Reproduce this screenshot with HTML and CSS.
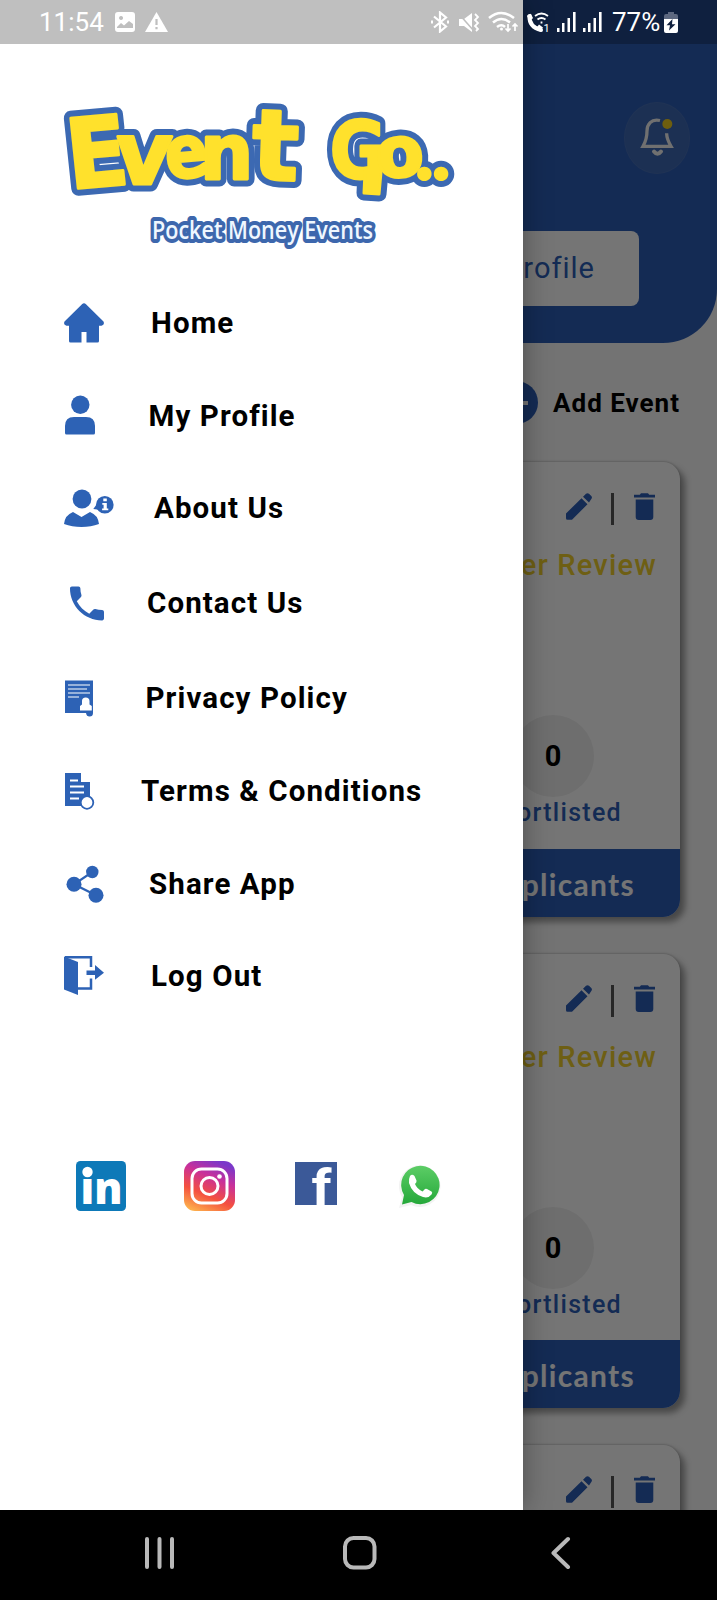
FILE: index.html
```html
<!DOCTYPE html>
<html lang="en">
<head>
<meta charset="utf-8">
<title>Event Go</title>
<link rel="stylesheet" href="styles.css">
</head>
<body>
<svg width="0" height="0" class="defs">
  <defs>
    <symbol id="pencil" viewBox="0 0 26 27"><path d="M0 20.500 15.500 5.200l6 6L6 26.800H1.500Q0 26.800 0 25.300zM17 3.700 20 .8q1.500-1.300 3 0L25.300 3q1.300 1.500 0 3L23 9.500z"/></symbol>
    <symbol id="trash" viewBox="0 0 21 27"><path d="M0 1.700h5.800L7 .2h7l1.200 1.500H21v2.800H0zM1.700 6.500h17.600V24q0 3-3 3H4.700q-3 0-3-3z"/></symbol>
    <symbol id="signal" viewBox="0 0 20 20"><path d="M0 16h2.500v4H0zM5 11h2.500v9H5zM10.500 6H13v14h-2.500zM16 0h2.600v20H16z"/></symbol>
    <linearGradient id="ig" x1="0.2" y1="1" x2="0.65" y2="0"><stop offset="0" stop-color="#fdb04c"/><stop offset=".35" stop-color="#f4503f"/><stop offset=".7" stop-color="#c9309a"/><stop offset="1" stop-color="#7b38c9"/></linearGradient>
    <linearGradient id="wa" x1="0" y1="0" x2="0" y2="1"><stop offset="0" stop-color="#5ccd66"/><stop offset="1" stop-color="#25a83a"/></linearGradient>
  </defs>
</svg>
<div class="phone">
  <div class="stage">
    <main class="page">
      <header class="hero">
        <div class="bell">
          <svg width="66" height="72" viewBox="0 0 66 72" fill="none" stroke="#f3f3f3" stroke-width="3.300"><path d="M36 19.500c-9-2-13 4-13 10.500 0 7-1 10-4 15.300h28c-3-5-4.200-7.300-4.400-13"/><path d="M30 50.500q3.500 4.500 7 0" stroke-width="4" stroke-linecap="round"/><circle cx="43.300" cy="23" r="5" fill="#f0cc20" stroke="none"/></svg>
        </div>
        <div class="profile-btn">My Profile</div>
      </header>
      <div class="add"><span class="plus"></span><span>Add Event</span></div>
      <section class="cards">
        <article class="card">
          <div class="tools"><svg class="pencil"><use href="#pencil"/></svg><i></i><svg class="trash"><use href="#trash"/></svg></div>
          <div class="review">Under Review</div>
          <div class="stat"><b>0</b><span>Shortlisted</span></div>
          <div class="foot">Applicants</div>
        </article>
        <article class="card">
          <div class="tools"><svg class="pencil"><use href="#pencil"/></svg><i></i><svg class="trash"><use href="#trash"/></svg></div>
          <div class="review">Under Review</div>
          <div class="stat"><b>0</b><span>Shortlisted</span></div>
          <div class="foot">Applicants</div>
        </article>
        <article class="card">
          <div class="tools"><svg class="pencil"><use href="#pencil"/></svg><i></i><svg class="trash"><use href="#trash"/></svg></div>
        </article>
      </section>
    </main>
    <div class="scrim"></div>
    <aside class="drawer">
      <svg class="logo" width="420" height="170" viewBox="0 0 420 170">
        <g id="word" class="word">
          <text transform="translate(20 99) skewY(-5) skewX(6) scale(.92 1)" font-size="97">E</text>
          <text transform="translate(64 94) skewX(-3)" font-size="87">v</text>
          <text transform="translate(117 89) rotate(-5) scale(.87 1)" font-size="73">e</text>
          <text transform="translate(150 89) scale(.97 1)" font-size="77">n</text>
          <text transform="translate(201 89) rotate(2) scale(1 1)" font-size="98">t</text>
          <text transform="translate(280 88) scale(.86 1)" font-size="79">G</text>
          <path d="M315 82 331 82 329 104 314 103z"/>
          <text transform="translate(327 88) rotate(-4)" font-size="70">o</text>
          <text class="dots" x="366" y="89" font-size="70">..</text>
        </g>
        <use href="#word" class="face"/>
        <text class="tag" x="102" y="148.500" textLength="221" lengthAdjust="spacingAndGlyphs">Pocket Money Events</text>
      </svg>
      <nav class="menu">
        <a><svg viewBox="0 0 50 50"><path d="M18 6.200q2-2 4 0L39.500 23.500q1.500 3.500-2 4.200H35V43q0 1.500-1.500 1.500H22.500V34h-5v10.500H6.500Q5 44.500 5 43V27.700H2.500Q-1 27 .5 23.500z"/></svg><span>Home</span></a>
        <a><svg viewBox="0 0 50 50"><circle cx="16.300" cy="14.700" r="9.200"/><path d="M1 43V36q0-9 9-9h12q9 0 9 9v7q0 1.500-1.500 1.500h-27Q1 44.500 1 43z"/></svg><span>My Profile</span></a>
        <a><svg viewBox="0 0 50 50"><circle cx="18" cy="16" r="9.400"/><path d="M0 41q1-9 9-12l8.500 5L26 29q8 3 9 12-8 3-17.500 3T0 41z"/><circle cx="40.800" cy="21.800" r="8.800"/><path d="M35 18 29.300 26 37 27z"/><path d="M39.300 15.500h3.500v2.800h-3.500zM38.300 20h4.500v5.500h1.500v1.700h-6.200v-1.700h1.500v-3.800h-1.300z" fill="#fff"/></svg><span>About Us</span></a>
        <a><svg viewBox="0 0 50 50"><path transform="translate(.3 2.800) scale(1.890)" d="M6.620 10.790c1.440 2.830 3.760 5.140 6.590 6.590l2.200-2.200c.27-.27.67-.36 1.020-.24 1.120.37 2.330.57 3.570.57.55 0 1 .45 1 1V20c0 .55-.45 1-1 1-9.390 0-17-7.610-17-17 0-.55.45-1 1-1h3.500c.55 0 1 .45 1 1 0 1.250.2 2.450.57 3.570.11.35.03.74-.25 1.020z"/></svg><span>Contact Us</span></a>
        <a><svg viewBox="0 0 50 50"><path d="M1 7.500h28V40q0 3.500-3.500 3.500-3 0-3.500-3.500H1z"/><path d="M4 12h22M4 16h19M4 20h22M4 24h11" stroke="#fff" stroke-width="1.200"/><path d="M16 37.500V33l2-1.500V28q0-3.500 3.700-3.500T25.500 28v3.500l2.300 1.500v4.500z" fill="#fff"/></svg><span>Privacy Policy</span></a>
        <a><svg viewBox="0 0 50 50"><path d="M1 7h16v9h9v15l-8 9H1z"/><path d="M6 14.500h8M6 20.500h14M6 26.500h14M6 32.500h9" stroke="#fff" stroke-width="1.800"/><circle cx="23" cy="36.500" r="6.300" fill="#fff" stroke="#2d62b5" stroke-width="1.800"/></svg><span>Terms &amp; Conditions</span></a>
        <a><svg viewBox="0 0 50 50"><path d="M28.300 14 10 26.300 32 37.300" fill="none" stroke="#2d62b5" stroke-width="2.200"/><circle cx="28.300" cy="14" r="6.200"/><circle cx="10" cy="26.300" r="7.500"/><circle cx="32" cy="37.300" r="7.500"/></svg><span>Share App</span></a>
        <a><svg viewBox="0 0 50 50"><path d="M0 6.500 14 12v33L0 39.500z"/><path d="M1 7.200h26V17M27 28.500v10H14" fill="none" stroke="#2d62b5" stroke-width="2.500"/><path d="M22.500 20.500H31V15l9 7.800-9 7V25h-8.500z"/></svg><span>Log Out</span></a>
      </nav>
      <div class="social">
        <svg width="50" height="50" viewBox="0 0 50 50"><rect width="50" height="50" rx="4.500" fill="#0d79b8"/><text x="4.500" y="43.300" class="in" textLength="42" lengthAdjust="spacingAndGlyphs">ın</text><circle cx="11.500" cy="11" r="5.200" fill="#fff"/></svg>
        <svg width="51" height="50" viewBox="0 0 51 50"><rect width="51" height="50" rx="11" fill="url(#ig)"/><g fill="none" stroke="#fff" stroke-width="3"><rect x="8" y="8" width="35" height="34" rx="9.500"/><circle cx="25.500" cy="25" r="8.500"/></g><circle cx="35.500" cy="15.500" r="2.300" fill="#fff"/></svg>
        <svg width="42" height="43" viewBox="0 0 42 43"><rect width="42" height="43" fill="#3b5998"/><text x="16.500" y="43" class="fb" textLength="20" lengthAdjust="spacingAndGlyphs">f</text></svg>
        <svg width="46" height="46" viewBox="0 0 46 46"><path d="M2 44 5 33A20.800 20.800 0 1 1 14 41z" fill="#f3f3f3"/><path d="M5 40.500 7 31A19.200 19.200 0 1 1 14.500 38z" fill="url(#wa)"/><path d="M13 12q2-2.500 4.500 0l2 4.500q.5 1.500-1.500 3.500 2 5 7.500 7.500l2.500-2.500q1-.7 2 0l4.500 2.500q1.500 1 0 3-3 4-8.500 2.500-11-3.500-14-14-.5-4 1-7z" fill="#fff"/></svg>
      </div>
    </aside>
    <div class="status">
      <span class="time">11:54</span>
      <svg class="s-img" width="20" height="20" viewBox="0 0 20 20"><path fill="#fff" fill-rule="evenodd" d="M3 0h14q3 0 3 3v14q0 3-3 3H3q-3 0-3-3V3q0-3 3-3zM2 16h16v-4l-4-3-5 4.500L6 11l-4 4zM6 4a2 2 0 1 0 .1 0z"/></svg>
      <svg class="s-warn" width="23" height="20" viewBox="0 0 23 20"><path fill="#fff" d="M11.500 0 23 20H0z"/><path stroke="#bfbfbf" stroke-width="2.200" d="M11.500 7v6M11.500 15v2.200"/></svg>
      <svg class="s-bt" width="20" height="22" viewBox="0 0 20 22" fill="none" stroke="#fff" stroke-width="2.200"><path d="m4 5.500 12 10-6 5V1.500l6 5-12 10"/><path d="M1 11h2M17 11h2" stroke-width="3"/></svg>
      <svg class="s-mute" width="21" height="21" viewBox="0 0 21 21"><path fill="#fff" d="M0 7h5l8-6v19l-8-6H0z"/><path d="m0 2 15 17" stroke="#bfbfbf" stroke-width="1.500"/><path d="m16 2 3 3-3 3 3 3-3 3 3 3-2 2" fill="none" stroke="#fff" stroke-width="1.800"/></svg>
      <svg class="s-wifi" width="31" height="22" viewBox="0 0 31 22" fill="none" stroke="#fff" stroke-width="2.500"><path d="M1 7q12-10 25 0M5 11.500q8.500-7 17 0M9 16q4.500-3.500 8 0"/><path d="M20 13v7m-2.500-2.500L20 20l2.500-2.500M27 20v-7m-2.500 2.500L27 13l2.500 2.500" stroke-width="1.700"/><circle cx="13.500" cy="18" r="1.500" fill="#fff" stroke="none"/></svg>
      <svg class="s-call" width="25" height="21" viewBox="0 0 25 21"><path fill="none" stroke="#fff" stroke-width="4" stroke-linecap="round" d="M3.500 4Q3 15 15 18"/><path stroke="#fff" stroke-width="5" d="m2 6 4-2M12 18l3-4"/><path fill="none" stroke="#fff" stroke-width="1.800" d="M9 4q6.500-5 13 0M11.500 7.500q4-3 8 0M15.500 9.500v2"/><text x="17.500" y="19.500" class="one">1</text></svg>
      <svg class="s-sig" width="20" height="20"><use href="#signal"/></svg>
      <svg class="s-sig" width="20" height="20"><use href="#signal"/></svg>
      <span class="pct">77%</span>
      <svg class="s-bat" width="14" height="21" viewBox="0 0 14 21"><path fill="#5d6880" d="M4 0h6v2h2q2 0 2 2v5H0V4q0-2 2-2h2z"/><path fill="#fff" d="M0 7h14v12q0 2-2 2H2q-2 0-2-2z"/><path fill="#11213f" d="m8.500 7-6 6.300h3.500L5 18.500l6.500-6.300H8z"/></svg>
    </div>
  </div>
  <footer class="navbar">
    <svg class="recents" width="30" height="32" viewBox="0 0 30 32"><path d="M2 2v28M14.500 2v28M27 2v28"/></svg>
    <svg class="homekey" width="34" height="34" viewBox="0 0 34 34"><rect x="2" y="2" width="29.500" height="29.500" rx="8.500"/></svg>
    <svg class="back" width="20" height="34" viewBox="0 0 20 34"><path d="M17 3 2.500 17 17 31"/></svg>
  </footer>
</div>
</body>
</html>
```

FILE: styles.css
```css
* { box-sizing: border-box; }
body { margin: 0; font-family: Roboto, "Liberation Sans", sans-serif; color: #000; }
.defs { position: absolute; }
.phone { width: 717px; height: 1600px; display: flex; flex-direction: column; overflow: hidden; }
.stage { position: relative; height: 1510px; overflow: hidden; background: #fafafa; }
svg { display: block; flex: none; }

/* Screen beneath the drawer */
.page { display: flex; flex-direction: column; align-items: stretch; }
.hero { height: 343px; background: #2d5fb8; border-bottom-right-radius: 54px; display: flex; flex-direction: column; align-items: flex-end; padding-top: 102px; }
.bell { width: 66px; height: 72px; margin-right: 27px; border-radius: 50%; background: #3d69b6; border: 1px solid #476fb7; }
.bell svg { margin: -2px -1px; }
.profile-btn { width: 400px; height: 75px; margin: 57px 78px 0 0; padding-right: 44px; border-radius: 8px; background: #fff; color: #2d5fb8; text-align: right; font-size: 29px; line-height: 75px; letter-spacing: 1px; }
.add { height: 43px; margin: 38px 37px 0 0; display: flex; justify-content: flex-end; align-items: center; gap: 15px; font-size: 26px; font-weight: 700; letter-spacing: 1px; }
.plus { width: 43px; height: 43px; border-radius: 50%; background: linear-gradient(#fff, #fff) center / 23px 4px no-repeat, linear-gradient(#fff, #fff) center / 4px 23px no-repeat, #2d5fb8; }
.cards { margin: 38px 37px 0 37px; display: flex; flex-direction: column; gap: 37px; }
.card { height: 454.500px; flex: none; background: #fff; border-radius: 17px; box-shadow: 5px 5px 6px rgba(0,0,0,.38), 0 -1px 2px rgba(0,0,0,.15); overflow: hidden; display: flex; flex-direction: column; align-items: flex-end; }
.tools { height: 33px; margin: 31px 25px 0 0; display: flex; align-items: flex-start; fill: #2d5fb8; }
.tools i { width: 3px; height: 32px; background: #555; margin: 0 20px 0 20px; }
.tools .pencil { width: 26px; height: 27px; margin-right: -1px; }
.tools .trash { width: 21px; height: 27px; }
.review { height: 40px; line-height: 40px; margin: 19px 23px 0 0; color: #f0cf2d; font-size: 29px; font-weight: 500; letter-spacing: 1.200px; }
.stat { margin: 130px 58px 0 0; display: flex; flex-direction: column; align-items: flex-end; }
.stat b { width: 82px; height: 82px; margin-right: 28px; border-radius: 50%; background: #f0f0f0; font-size: 29px; line-height: 82px; text-align: center; }
.stat span { height: 30px; line-height: 32px; font-size: 25px; font-weight: 500; letter-spacing: 1.300px; color: #2d5fb8; }
.foot { align-self: stretch; height: 68px; margin-top: auto; padding-right: 45px; text-align: right; font: 700 30px/70px Lato, sans-serif; letter-spacing: 1.300px; color: #fff; background: #2d5fb8; }
.scrim { position: absolute; inset: 0; background: rgba(0,0,0,.54); }

/* Navigation drawer */
.drawer { position: absolute; top: 0; left: 0; width: 523px; height: 1510px; background: #fff; box-shadow: 0 0 26px rgba(0,0,0,.35); padding-top: 90px; }
.logo { margin-left: 50px; fill: #3c69b2; stroke: #3c69b2; stroke-width: 15px; }
.word { font-family: "DejaVu Sans", sans-serif; font-weight: 700; stroke-linejoin: round; }
.word .dots { font-family: Lato, sans-serif; font-weight: 900; }
.face { fill: #ffe12c; stroke: #ffe12c; stroke-width: 3px; }
.tag { font: 600 25px "Open Sans", sans-serif; fill: #eff7ff; stroke: #3d67ad; stroke-width: 8px; stroke-linejoin: round; paint-order: stroke; }
.menu { margin: 32.500px 0 0 64px; display: flex; flex-direction: column; }
.menu a { height: 60px; display: flex; align-items: center; font-size: 29.500px; font-weight: 700; letter-spacing: 1.100px; white-space: nowrap; }
.menu a > svg { width: 50px; height: 50px; fill: #2d62b5; }
.menu a + a { margin-top: 32.500px; }
.menu a:nth-child(4), .menu a:nth-child(5) { margin-top: 35px; }
.menu a:nth-child(6) { margin-top: 33px; }
.menu a:nth-child(8) { margin-top: 32px; }
.menu span { margin-left: 37px; }
.menu a:nth-child(2) span { margin-left: 34.500px; }
.menu a:nth-child(3) span { margin-left: 40px; }
.menu a:nth-child(4) span { margin-left: 33px; }
.menu a:nth-child(5) span { margin-left: 31.500px; }
.menu a:nth-child(6) span { margin-left: 27px; }
.menu a:nth-child(7) span { margin-left: 35px; }
.menu a:nth-child(2) span, .menu a:nth-child(7) span, .menu a:nth-child(8) span { padding-top: 2px; }
.social { display: flex; align-items: flex-start; margin: 156px 0 0 76px; }
.social svg:nth-child(2) { margin-left: 58px; }
.social svg:nth-child(3) { margin: 1px 0 0 60px; }
.social svg:nth-child(4) { margin: 3px 0 0 60px; }
.in { font: 800 45px "Open Sans", sans-serif; fill: #fff; stroke: none; }
.fb { font: 700 50px Roboto, sans-serif; fill: #fff; }

/* System bars */
.status { position: absolute; top: 0; left: 0; width: 717px; height: 44px; background: rgba(0,0,0,.25); color: #fff; display: flex; align-items: center; padding-left: 39px; }
.status span { font-size: 26px; line-height: 44px; white-space: nowrap; }
.time { width: 76px; }
.s-warn { margin-left: 10px; }
.s-bt { margin-left: 262px; }
.s-mute { margin-left: 9px; }
.s-wifi { margin-left: 8px; }
.s-call { margin-left: 7px; }
.s-sig { margin-left: 6px; fill: #fff; }
.pct { width: 52px; margin-left: 9px; }
.one { font: 11px Roboto, sans-serif; fill: #fff; }
.navbar { height: 90px; background: #000; display: flex; align-items: center; padding: 0 0 4px 145px; fill: none; stroke: #b9b9b9; stroke-width: 4px; stroke-linecap: round; stroke-linejoin: round; }
.homekey { margin-left: 168px; }
.back { margin-left: 174px; }
```
